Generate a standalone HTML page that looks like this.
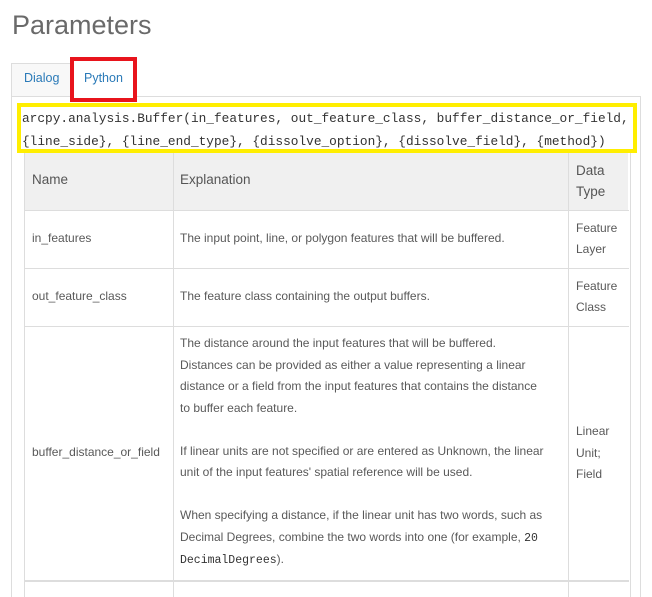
<!DOCTYPE html>
<html><head><style>
html,body{margin:0;width:652px;height:597px;overflow:hidden}
body{background:#fff;position:relative;font-family:"Liberation Sans",sans-serif;color:#4c4c4c}
.a{position:absolute}
h1{position:absolute;left:12px;top:10px;margin:0;font-weight:normal;font-size:27px;color:#6a6a6a}
.tab{font-size:12.5px;color:#2a7ab8}
.t{font-size:12px;color:#595959}
.code{font-family:"Liberation Mono",monospace;font-size:12.8px;color:#333;white-space:pre;line-height:23px}
.m{font-family:"Liberation Mono",monospace;font-size:11.5px;color:#333}
</style></head><body>
<h1>Parameters</h1>
<div class="a" style="left:11px;top:63px;width:58px;height:33px;background:#f8f8f8;border:1px solid #ddd;border-bottom:none"></div>
<div class="a tab" style="left:24px;top:71px">Dialog</div>
<div class="a" style="left:11px;top:96px;width:628px;height:510px;border:1px solid #ddd"></div>
<div class="a" style="left:70px;top:57px;width:59px;height:37px;border:4px solid #e8141c;background:#fff"></div>
<div class="a tab" style="left:84px;top:71px">Python</div>
<div class="a" style="left:17px;top:103px;width:612px;height:42px;border:4px solid #ffee00;background:#fff"></div>
<div class="a code" style="left:22px;top:107px">arcpy.analysis.Buffer(in_features, out_feature_class, buffer_distance_or_field,
{line_side}, {line_end_type}, {dissolve_option}, {dissolve_field}, {method})</div>
<div class="a" style="left:24px;top:153px;width:604px;height:57px;background:#f0f0f0"></div>
<div class="a" style="left:24px;top:153px;width:605px;height:450px;border-left:1px solid #ddd;border-right:1px solid #ddd"></div>
<div class="a" style="left:173px;top:153px;width:1px;height:450px;background:#ddd"></div>
<div class="a" style="left:568px;top:153px;width:1px;height:450px;background:#ddd"></div>
<div class="a" style="left:24px;top:210px;width:605px;height:1px;background:#ddd"></div>
<div class="a" style="left:24px;top:268px;width:605px;height:1px;background:#ddd"></div>
<div class="a" style="left:24px;top:326px;width:605px;height:1px;background:#ddd"></div>
<div class="a" style="left:24px;top:580px;width:605px;height:2px;background:#ddd"></div>
<div class="a" style="left:32px;top:172px;font-size:13.5px;color:#555">Name</div>
<div class="a" style="left:180px;top:172px;font-size:13.5px;color:#555">Explanation</div>
<div class="a" style="left:576px;top:160px;font-size:13.5px;color:#555;line-height:21px">Data<br>Type</div>
<div class="a t" style="left:32px;top:231px">in_features</div>
<div class="a t" style="left:180px;top:231px">The input point, line, or polygon features that will be buffered.</div>
<div class="a t" style="left:576px;top:218px;line-height:21px">Feature<br>Layer</div>
<div class="a t" style="left:32px;top:289px">out_feature_class</div>
<div class="a t" style="left:180px;top:289px">The feature class containing the output buffers.</div>
<div class="a t" style="left:576px;top:276px;line-height:21px">Feature<br>Class</div>
<div class="a t" style="left:32px;top:445px">buffer_distance_or_field</div>
<div class="a t" style="left:576px;top:421px;line-height:21.5px">Linear<br>Unit;<br>Field</div>
<div class="a t" style="left:180px;top:333px;line-height:21.5px;width:388px">The distance around the input features that will be buffered.<br>Distances can be provided as either a value representing a linear<br>distance or a field from the input features that contains the distance<br>to buffer each feature.<br><br>If linear units are not specified or are entered as Unknown, the linear<br>unit of the input features' spatial reference will be used.<br><br>When specifying a distance, if the linear unit has two words, such as<br>Decimal Degrees, combine the two words into one (for example, <span class="m">20</span><br><span class="m">DecimalDegrees</span>).</div>
</body></html>
